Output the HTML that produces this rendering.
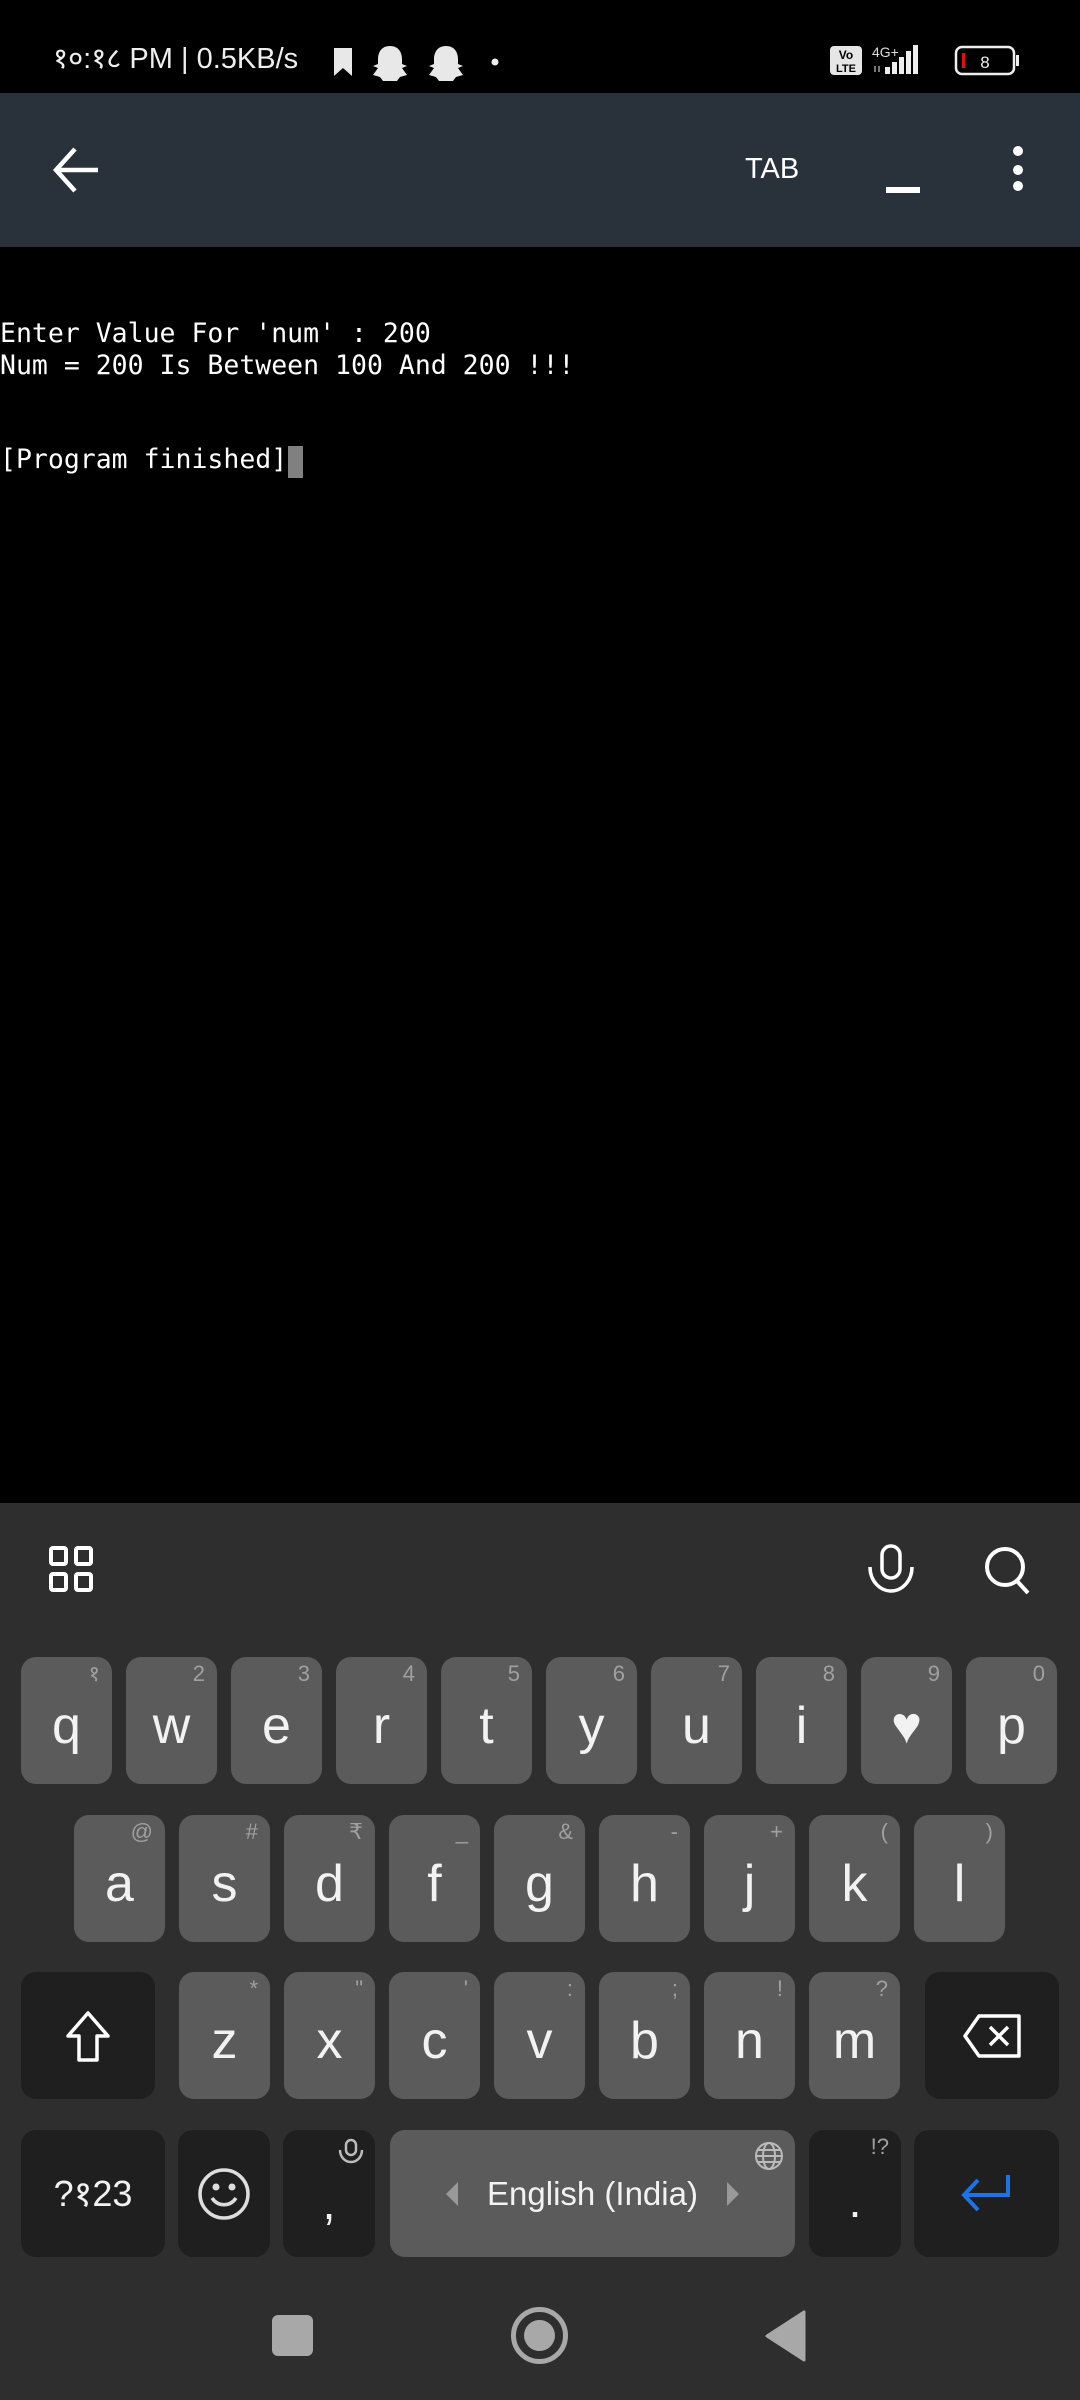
<!DOCTYPE html>
<html><head><meta charset="utf-8"><style>
*{margin:0;padding:0;box-sizing:border-box}
body{width:1080px;height:2400px;background:#000;position:relative;overflow:hidden;font-family:"Liberation Sans","Noto Sans CJK SC",sans-serif;color:#fff}
.abs{position:absolute}
.term{left:0;top:318px;font-family:"DejaVu Sans Mono","Liberation Mono",monospace;font-size:26.5px;line-height:31.5px;white-space:pre;color:#fff}
.kb{left:0;top:1503px;width:1080px;height:897px;background:#2e2e2e}
.k{position:absolute;height:127px;border-radius:15px;background:#5b5b5b;color:#f2f2f2;font-size:52px;text-align:center;line-height:139px}
.k.d{background:#1f1f1f;line-height:127px}
.k i{position:absolute;right:12px;top:4px;font-style:normal;font-size:22px;line-height:26px;color:#a0a0a0}
</style></head><body>
<!-- status bar -->
<div class="abs" style="left:53px;top:40px;font-size:29px;color:#eee;line-height:38px">१०:१८ PM | 0.5KB/s</div>
<svg class="abs" style="left:330px;top:42px" width="180" height="44">
<path d="M4 6h18v28l-9-8-9 8z" fill="#e8e8e8"/>
<path d="M60 4c-9 0-12 7-12 13v5l-5 2 5 2-5 7 7 2 3 4h14l3-4 7-2-5-7 5-2-5-2v-5c0-6-3-13-12-13z" fill="#e8e8e8"/>
<path d="M116 4c-9 0-12 7-12 13v5l-5 2 5 2-5 7 7 2 3 4h14l3-4 7-2-5-7 5-2-5-2v-5c0-6-3-13-12-13z" fill="#e8e8e8"/>
<circle cx="165" cy="20" r="3.5" fill="#eee"/>
</svg>
<svg class="abs" style="left:828px;top:40px" width="200" height="40">
<rect x="2" y="6" width="32" height="29" rx="4" fill="#e6e6e6"/>
<text x="18" y="19" font-size="12" font-weight="bold" text-anchor="middle" fill="#000" font-family="Liberation Sans">Vo</text>
<text x="18" y="32" font-size="11" font-weight="bold" text-anchor="middle" fill="#000" font-family="Liberation Sans">LTE</text>
<text x="44" y="17" font-size="14" fill="#ddd" font-family="Liberation Sans">4G+</text>
<path d="M47 26v6M51 26v6" stroke="#777" stroke-width="2"/>
<rect x="57" y="27" width="5" height="7" fill="#eee"/><rect x="64" y="22" width="5" height="12" fill="#eee"/><rect x="71" y="17" width="5" height="17" fill="#eee"/><rect x="78" y="11" width="5" height="23" fill="#eee"/><rect x="85" y="5" width="5" height="29" fill="#eee"/>
<rect x="128" y="7" width="58" height="27" rx="6" fill="none" stroke="#eee" stroke-width="2.5"/>
<rect x="188" y="15" width="3" height="11" fill="#eee"/>
<rect x="134" y="13" width="3" height="15" fill="#d11"/>
<text x="157" y="28" font-size="17" fill="#eee" text-anchor="middle" font-family="Liberation Sans">8</text>
</svg>
<!-- toolbar -->
<div class="abs" style="left:0;top:93px;width:1080px;height:154px;background:#29323a"></div>
<svg class="abs" style="left:50px;top:145px" width="55" height="52"><path d="M48 25H6M25 4L6 25l19 21" stroke="#fff" stroke-width="4.5" fill="none"/></svg>
<div class="abs" style="left:745px;top:151px;font-size:29px;line-height:36px">TAB</div>
<div class="abs" style="left:886px;top:187px;width:34px;height:6px;background:#fff"></div>
<div class="abs" style="left:1013px;top:146px;width:10px;height:10px;border-radius:5px;background:#fff"></div>
<div class="abs" style="left:1013px;top:165px;width:10px;height:10px;border-radius:5px;background:#fff"></div>
<div class="abs" style="left:1013px;top:181px;width:10px;height:10px;border-radius:5px;background:#fff"></div>
<!-- terminal -->
<div class="abs term">Enter Value For 'num' : 200
Num = 200 Is Between 100 And 200 !!!


[Program finished]</div>
<div class="abs" style="left:288px;top:446px;width:15px;height:32px;background:#808080"></div>
<!-- keyboard -->
<div class="abs kb"></div>
<svg class="abs" style="left:48px;top:1545px" width="48" height="50"><g fill="none" stroke="#fff" stroke-width="4"><rect x="3" y="3" width="15" height="16" rx="2"/><rect x="28" y="3" width="15" height="16" rx="2"/><rect x="3" y="29" width="15" height="16" rx="2"/><rect x="28" y="29" width="15" height="16" rx="2"/></g></svg>
<svg class="abs" style="left:864px;top:1543px" width="56" height="52"><g fill="none" stroke="#fff" stroke-width="3.5"><rect x="18" y="3" width="18" height="32" rx="9"/><path d="M6 24c0 14 10 24 21 24s21-10 21-24"/></g></svg>
<svg class="abs" style="left:983px;top:1545px" width="52" height="52"><g fill="none" stroke="#fff" stroke-width="4"><circle cx="22" cy="22" r="18"/><path d="M34 36l11 12"/></g></svg>

<div class="k" style="left:21px;top:1657px;width:91px">q<i>१</i></div>
<div class="k" style="left:126px;top:1657px;width:91px">w<i>2</i></div>
<div class="k" style="left:231px;top:1657px;width:91px">e<i>3</i></div>
<div class="k" style="left:336px;top:1657px;width:91px">r<i>4</i></div>
<div class="k" style="left:441px;top:1657px;width:91px">t<i>5</i></div>
<div class="k" style="left:546px;top:1657px;width:91px">y<i>6</i></div>
<div class="k" style="left:651px;top:1657px;width:91px">u<i>7</i></div>
<div class="k" style="left:756px;top:1657px;width:91px">i<i>8</i></div>
<div class="k" style="left:861px;top:1657px;width:91px">♥<i>9</i></div>
<div class="k" style="left:966px;top:1657px;width:91px">p<i>0</i></div>

<div class="k" style="left:74px;top:1815px;width:91px">a<i>@</i></div>
<div class="k" style="left:179px;top:1815px;width:91px">s<i>#</i></div>
<div class="k" style="left:284px;top:1815px;width:91px">d<i>₹</i></div>
<div class="k" style="left:389px;top:1815px;width:91px">f<i>_</i></div>
<div class="k" style="left:494px;top:1815px;width:91px">g<i>&amp;</i></div>
<div class="k" style="left:599px;top:1815px;width:91px">h<i>-</i></div>
<div class="k" style="left:704px;top:1815px;width:91px">j<i>+</i></div>
<div class="k" style="left:809px;top:1815px;width:91px">k<i>(</i></div>
<div class="k" style="left:914px;top:1815px;width:91px">l<i>)</i></div>

<div class="k d" style="left:21px;top:1972px;width:134px"><svg style="margin-top:38px" width="48" height="54"><path d="M24 3L4 26h11v24h18V26h11z" fill="none" stroke="#fff" stroke-width="3.5" stroke-linejoin="round"/></svg></div>
<div class="k" style="left:179px;top:1972px;width:91px">z<i>*</i></div>
<div class="k" style="left:284px;top:1972px;width:91px">x<i>"</i></div>
<div class="k" style="left:389px;top:1972px;width:91px">c<i>'</i></div>
<div class="k" style="left:494px;top:1972px;width:91px">v<i>:</i></div>
<div class="k" style="left:599px;top:1972px;width:91px">b<i>;</i></div>
<div class="k" style="left:704px;top:1972px;width:91px">n<i>!</i></div>
<div class="k" style="left:809px;top:1972px;width:91px">m<i>?</i></div>
<div class="k d" style="left:925px;top:1972px;width:134px"><svg style="margin-top:40px" width="62" height="48"><path d="M18 4h40v40H18L4 24z" fill="none" stroke="#fff" stroke-width="3.5" stroke-linejoin="round"/><path d="M29 15l18 18M47 15L29 33" stroke="#fff" stroke-width="3.5"/></svg></div>

<div class="k d" style="left:21px;top:2130px;width:144px;font-size:36px">?१23</div>
<div class="k d" style="left:178px;top:2130px;width:92px"><svg style="margin-top:37px" width="54" height="54"><g fill="none" stroke="#ddd" stroke-width="3.5"><circle cx="27" cy="27" r="24"/><path d="M15 31c6 9 18 9 24 0"/></g><circle cx="19" cy="20" r="3.5" fill="#ddd"/><circle cx="35" cy="20" r="3.5" fill="#ddd"/></svg></div>
<div class="k d" style="left:283px;top:2130px;width:92px;font-size:46px"><span style="position:relative;top:10px">,</span><svg style="position:absolute;right:10px;top:8px" width="28" height="28"><g fill="none" stroke="#bbb" stroke-width="2.5"><rect x="9" y="2" width="10" height="15" rx="5"/><path d="M3 12c0 7 5 12 11 12s11-5 11-12"/></g></svg></div>
<div class="k" style="left:390px;top:2130px;width:405px;font-size:33px;line-height:127px">
<svg style="position:absolute;left:55px;top:51px" width="14" height="26"><path d="M13 1L1 13l12 12z" fill="#999"/></svg>
English (India)
<svg style="position:absolute;right:55px;top:51px" width="14" height="26"><path d="M1 1l12 12L1 25z" fill="#999"/></svg>
<svg style="position:absolute;right:10px;top:10px" width="32" height="32"><g fill="none" stroke="#bbb" stroke-width="2"><circle cx="16" cy="16" r="13"/><ellipse cx="16" cy="16" rx="6" ry="13"/><path d="M3 16h26M5 10h22M5 22h22"/></g></svg></div>
<div class="k d" style="left:809px;top:2130px;width:92px;font-size:46px"><span style="position:relative;top:8px">.</span><i>!?</i></div>
<div class="k d" style="left:914px;top:2130px;width:145px"><svg style="margin-top:42px" width="54" height="44"><path d="M48 3v20H6M18 8L4 23l14 15" fill="none" stroke="#1a73e8" stroke-width="4"/></svg></div>

<!-- nav -->
<div class="abs" style="left:272px;top:2315px;width:41px;height:41px;border-radius:6px;background:#a8a8a8"></div>
<div class="abs" style="left:511px;top:2307px;width:57px;height:57px;border-radius:50%;border:5px solid #a8a8a8"></div>
<div class="abs" style="left:524px;top:2320px;width:31px;height:31px;border-radius:50%;background:#a8a8a8"></div>
<svg class="abs" style="left:764px;top:2310px" width="42" height="52"><path d="M40 2v48L3 26z" fill="#a8a8a8" stroke="#a8a8a8" stroke-linejoin="round" stroke-width="3"/></svg>
</body></html>
